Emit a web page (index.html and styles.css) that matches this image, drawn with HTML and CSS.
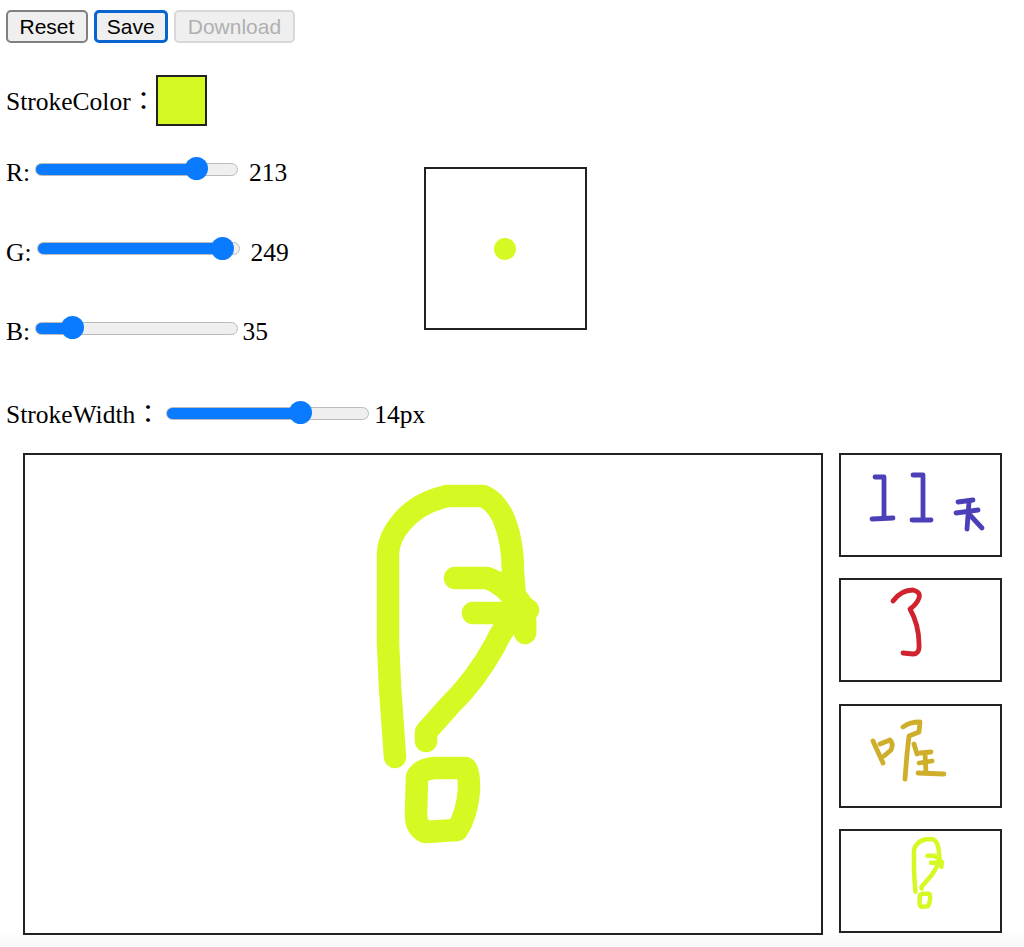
FILE: index.html
```html
<!DOCTYPE html>
<html lang="zh-Hant">

<head>
    <meta charset="UTF-8">
    <meta name="viewport" content="width=device-width, initial-scale=1.0">
    <title>Signature</title>
    <link rel="stylesheet" href="styles.css">
</head>

<body>
    <div class="toolbar">
        <button>Reset</button>
        <button class="focused">Save</button>
        <button disabled>Download</button>
    </div>

    <div class="color-row">
        <span class="color-label">StrokeColor：</span>
        <div class="swatch"></div>
    </div>

    <div class="color-section">
        <div class="sliders">
            <div class="slider-row">R:<input type="range" min="0" max="255" value="213" style="--fill: 163px"><span class="value wide">213</span></div>
            <div class="slider-row">G:<input type="range" min="0" max="255" value="249" style="--fill: 188px"><span class="value wide">249</span></div>
            <div class="slider-row">B:<input type="range" min="0" max="255" value="35" style="--fill: 36px"><span class="value">35</span></div>
        </div>
        <div class="preview">
            <div class="dot"></div>
        </div>
    </div>

    <div class="width-row">StrokeWidth：<input type="range" min="1" max="20" value="14" style="--fill: 135px"><span class="value">14px</span></div>

    <div class="board">
        <div class="canvas">
            <svg viewBox="0 0 796 478" width="796" height="478">
                <g id="ink-yellow" class="ink yellow main">
                    <path d="M370 302 L365 232 L363 188 L363 98 Q364 82 376 68 Q392 48 422 41 L458 41 Q470 46 478 62 Q488 85 488 118 L490 142 Q502 150 500 178" />
                    <path d="M430 123 L462 123 Q478 128 492 147 L503 155" />
                    <path d="M448 158 L492 158 Q478 172 470 190 Q450 226 425 250 L401 277 L401 286" />
                    <path d="M392 322 Q396 314 410 313 L440 313 Q444 314 444 335 Q442 360 432 375 L400 377 Q391 372 391 360 Z" />
                </g>
            </svg>
        </div>
        <div class="thumbs">
            <div class="thumb">
                <svg viewBox="0 0 160 100" width="160" height="100">
                    <g class="ink blue">
                        <polyline points="34,22 43,22 43,63" />
                        <polyline points="31,64 52,63" />
                        <polyline points="72,20 82,20 82,64" />
                        <polyline points="71,65 90,65" />
                        <polyline points="117,47 132,45" />
                        <polyline points="115,58 137,55" />
                        <polyline points="128,47 126,74" />
                        <polyline points="127,58 141,73" />
                    </g>
                </svg>
            </div>
            <div class="thumb">
                <svg viewBox="0 0 160 100" width="160" height="100">
                    <path class="ink red" d="M52 21 Q60 10 72 10 Q80 12 78 18 Q76 24 69 29 Q78 45 78 64 Q79 74 72 74 L62 73" />
                </svg>
            </div>
            <div class="thumb">
                <svg viewBox="0 0 160 100" width="160" height="100">
                    <g class="ink gold">
                        <polyline points="32,35 42,57" />
                        <path d="M39 38 L49 34 Q53 38 50 44 L43 50" />
                        <path d="M62 21 Q68 16 79 16 L78 26 L68 30 L66 48 L64 73" />
                        <polyline points="73,38 76,48" />
                        <polyline points="79,47 90,46" />
                        <polyline points="84,47 85,67" />
                        <polyline points="78,57 91,55" />
                        <polyline points="77,67 103,68" />
                    </g>
                </svg>
            </div>
            <div class="thumb">
                <svg viewBox="0 0 796 478" width="160" height="96">
                    <use href="#ink-yellow" />
                </svg>
            </div>
        </div>
    </div>
</body>

</html>
```

FILE: styles.css
```css
body {
    font-family: "Liberation Serif", "Noto Sans CJK TC", serif;
    font-size: 25.5px;
    color: #000;
    margin: 0;
    padding: 10px 6px 0;
    height: 937px;
    overflow: hidden;
    background: linear-gradient(to bottom, #fff 930px, #f8f8f8 947px);
}

.toolbar {
    display: flex;
    gap: 6px;
}

.toolbar button {
    font-family: "Liberation Sans", Arial, sans-serif;
    font-size: 21px;
    height: 33px;
    padding: 0 11.5px;
    background-color: #efefef;
    color: #000;
    border: 2px solid #808080;
    border-radius: 5px;
}

.toolbar .focused {
    border: 3px solid #0a64d0;
    padding: 0 10px;
}

.toolbar button:disabled {
    color: #b0b0b0;
    border-color: #d8d8d8;
    padding: 0 12px;
}

.color-row {
    display: flex;
    align-items: center;
    margin-top: 32px;
}

.color-label {
    padding-bottom: 4px;
}

.swatch {
    width: 47px;
    height: 47px;
    background-color: #d5f923;
    border: 2px solid #222;
}

.color-section {
    display: flex;
    align-items: flex-start;
    margin-top: 31px;
}

.sliders {
    width: 418px;
    display: flex;
    flex-direction: column;
    gap: 48.5px;
}

input[type="range"] {
    -webkit-appearance: none;
    appearance: none;
    width: 203px;
    height: 24px;
    margin: 0 2px 0 5px;
    background: transparent;
}

input[type="range"]::-webkit-slider-runnable-track {
    height: 13px;
    box-sizing: border-box;
    border: 1.5px solid #bbb;
    border-radius: 7px;
    background: linear-gradient(#0a7aff, #0a7aff) no-repeat left center / var(--fill) 100%, #efefef;
}

input[type="range"]::-webkit-slider-thumb {
    -webkit-appearance: none;
    appearance: none;
    width: 23px;
    height: 23px;
    margin-top: -6.5px;
    border-radius: 50%;
    background-color: #0a7aff;
}

.value {
    margin-left: 2.5px;
}

.value.wide {
    margin-left: 9px;
}

.preview {
    width: 159px;
    height: 159px;
    margin-top: 10px;
    border: 2px solid #222;
    display: flex;
    align-items: center;
    justify-content: center;
}

.dot {
    width: 22px;
    height: 22px;
    margin: 1px 1px 0 0;
    border-radius: 50%;
    background-color: #d5f923;
}

.width-row {
    margin-top: 46px;
}

.width-row input {
    vertical-align: -2px;
}

.width-row .value {
    margin-left: 3.5px;
}

.board {
    display: flex;
    gap: 16px;
    margin-top: 23px;
    padding-left: 17px;
}

.canvas {
    width: 796px;
    height: 478px;
    border: 2px solid #222;
}

.thumbs {
    height: 480px;
    display: flex;
    flex-direction: column;
    justify-content: space-between;
}

.thumb {
    width: 159px;
    height: 100px;
    border: 2px solid #222;
}

svg {
    display: block;
}

.ink {
    fill: none;
    stroke-width: 4.8;
    stroke-linecap: round;
    stroke-linejoin: round;
}

.ink.main {
    stroke-width: 22.5;
}

.yellow {
    stroke: #d5f923;
}

.blue {
    stroke: #4b40b8;
}

.red {
    stroke: #d0232e;
}

.gold {
    stroke: #cfae2c;
}
```
